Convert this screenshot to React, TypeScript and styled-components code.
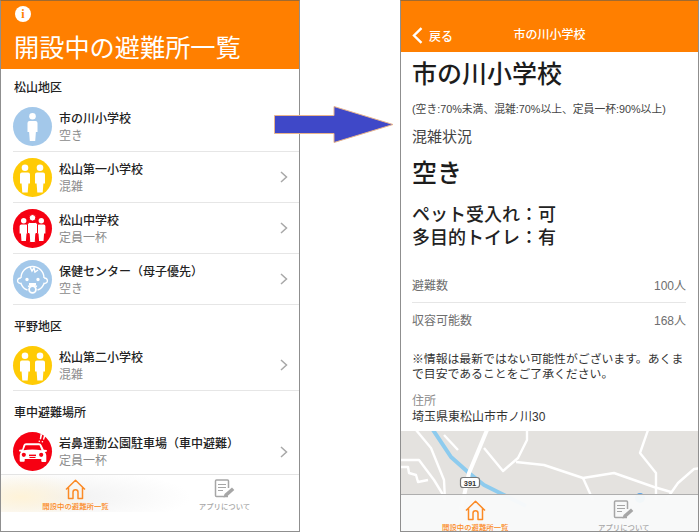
import React from "react";
import styled, { createGlobalStyle } from "styled-components";

const GlobalStyle = createGlobalStyle`
  html, body { margin: 0; padding: 0; background: #fff; }
  body { font-family: "Liberation Sans", "Noto Sans CJK JP", sans-serif; color: #222; }
`;

const ORANGE = "#ff7f00";
const BLUE = "#a3c8ea";
const YELLOW = "#ffcb05";
const RED = "#f60012";

const Page = styled.div`
  position: relative;
  width: 700px;
  height: 532px;
  display: flex;
  gap: 100px;
  overflow: hidden;
`;

const Phone = styled.div<{ $width: number }>`
  position: relative;
  box-sizing: border-box;
  width: ${(p) => p.$width}px;
  height: 532px;
  border: 1px solid #8f8f8f;
  border-top-color: #a06a30;
  display: flex;
  flex-direction: column;
  overflow: hidden;
  background: #fff;
`;

/* ---------- list screen ---------- */

const ListHeader = styled.header`
  height: 68px;
  flex: none;
  background: ${ORANGE};
  padding: 5px 0 0 13px;
  box-sizing: border-box;
  color: #fff;
`;

const InfoBadge = styled.div`
  width: 16px;
  height: 16px;
  margin-left: 1px;
  border-radius: 50%;
  background: #fff;
  color: ${ORANGE};
  display: flex;
  align-items: center;
  justify-content: center;
  font: bold 12px "Liberation Serif", serif;
`;

const BigTitle = styled.h1`
  margin: 10px 0 0;
  font-size: 25.2px;
  line-height: 32px;
  font-weight: 400;
`;

const List = styled.div`
  flex: 1;
  overflow: hidden;
`;

const SectionLabel = styled.div<{ $height: number }>`
  height: ${(p) => p.$height}px;
  box-sizing: border-box;
  display: flex;
  align-items: flex-end;
  padding: 0 0 4px 13px;
  font-size: 12px;
  line-height: 18px;
  font-weight: 500;
  color: #222;
`;

const Row = styled.div<{ $last?: boolean }>`
  height: 51px;
  box-sizing: border-box;
  margin-left: 12px;
  padding-right: 11px;
  display: flex;
  align-items: center;
  border-bottom: ${(p) => (p.$last ? "none" : "1px solid #e6e6e6")};
`;

const Avatar = styled.div<{ $color: string }>`
  width: 39px;
  height: 39px;
  flex: none;
  border-radius: 50%;
  background: ${(p) => p.$color};
  display: flex;
  align-items: center;
  justify-content: center;
`;

const RowText = styled.div`
  flex: 1;
  margin-left: 7px;
  padding-top: 2px;
`;

const RowName = styled.div`
  font-size: 12px;
  line-height: 17px;
  font-weight: 500;
  color: #222;
`;

const RowStatus = styled.div`
  font-size: 12px;
  line-height: 16px;
  color: #8c8c8c;
`;

const Tab = styled.div<{ $active?: boolean }>`
  flex: 1;
  display: flex;
  flex-direction: column;
  align-items: center;
  padding-top: 4px;
  color: ${(p) => (p.$active ? "#fb8a25" : "#a6a6a6")};
`;

const TabLabel = styled.div`
  margin-top: 1px;
  font-size: 7.4px;
  line-height: 12px;
  font-weight: 500;
  white-space: nowrap;
`;

const TabBar = styled.nav`
  height: 57px;
  flex: none;
  box-sizing: border-box;
  display: flex;
  border-top: 1px solid #e4e4e4;
  background:
    radial-gradient(ellipse 70px 24px at 20px 22px, #fff3d8 0%, rgba(255, 243, 216, 0) 100%) no-repeat,
    radial-gradient(ellipse 130px 28px at 60px 22px, #f1f1f1 0%, rgba(241, 241, 241, 0) 100%) no-repeat,
    #fff;
  background-size: 100% 37px, 100% 37px, auto;
`;

const OverlayTabs = styled(TabBar)`
  position: absolute;
  left: 0;
  right: 0;
  top: 493px;
  height: 40px;
  border-top-color: #aeaeae;
  background: rgba(249, 250, 250, 0.96);

  ${Tab} {
    padding-top: 5px;
  }
`;

/* ---------- detail screen ---------- */

const NavBar = styled.header`
  position: relative;
  height: 51px;
  flex: none;
  background: ${ORANGE};
  color: #fff;
  padding: 17px 11px 0;
  box-sizing: border-box;
  display: flex;
  align-items: center;
`;

const BackLabel = styled.span`
  margin-left: 6px;
  font-size: 12px;
  font-weight: 500;
`;

const NavTitle = styled.div`
  position: absolute;
  left: 0;
  right: 0;
  top: 25px;
  height: 18px;
  line-height: 18px;
  text-align: center;
  font-size: 12px;
  font-weight: 500;
`;

const Detail = styled.div`
  padding: 0 12px 0 11px;
  flex: none;
`;

const Heading = styled.h2`
  margin: 4px 0 0;
  font-size: 25px;
  line-height: 36px;
  font-weight: 500;
  color: #1c1c1c;
`;

const Legend = styled.div`
  margin-top: 10px;
  font-size: 10.8px;
  line-height: 14px;
  color: #444;
  white-space: nowrap;
`;

const StatusCaption = styled.div`
  margin-top: 10px;
  font-size: 15px;
  line-height: 22px;
  color: #444;
`;

const StatusValue = styled.div`
  margin-top: 7px;
  font-size: 25px;
  line-height: 36px;
  font-weight: 500;
  color: #1c1c1c;
`;

const Facility = styled.div`
  margin-top: 13px;
  font-size: 18px;
  line-height: 23px;
  font-weight: 500;
  color: #222;
`;

const StatRow = styled.div<{ $divider?: boolean }>`
  height: ${(p) => (p.$divider ? 35 : 33)}px;
  display: flex;
  align-items: center;
  justify-content: space-between;
  font-size: 12px;
  color: #6e6e6e;
  border-bottom: ${(p) => (p.$divider ? "1px solid #e6e6e6" : "none")};
`;

const Stats = styled.div`
  margin-top: 17px;
`;

const Note = styled.p`
  margin: 16px 0 0;
  font-size: 11.85px;
  line-height: 15px;
  color: #333;
  white-space: nowrap;
`;

const AddressLabel = styled.div`
  margin-top: 11px;
  font-size: 12px;
  line-height: 16px;
  color: #8c8c8c;
`;

const Address = styled.div`
  font-size: 12px;
  line-height: 16px;
  color: #333;
`;

const MapArea = styled.div`
  margin-top: 6px;
  flex: 1;
  background: #e4e2df;
  overflow: hidden;
`;

const Arrow = styled.svg`
  position: absolute;
  left: 274px;
  top: 106px;
`;

/* ---------- drawings ---------- */

const Figure = ({ x, top = 3, scale = 1 }: { x: number; top?: number; scale?: number }) => (
  <g transform={`translate(${x} ${top}) scale(${scale})`}>
    <circle cx="0" cy="3.3" r="3.3" />
    <path d="M-3 8h6q2 0 2 2v9H3.400L2.700 28H-2.700L-3.400 19H-5v-9q0-2 2-2z" />
  </g>
);

const People = ({ count }: { count: 1 | 2 | 3 }) => (
  <svg width="39" height="39" viewBox="-19.5 -19.5 39 39" fill="#fff">
    {count === 1 && <Figure x={0} top={-13.500} />}
    {count === 2 && (
      <>
        <Figure x={-7.5} top={-13} />
        <Figure x={7.5} top={-13} />
      </>
    )}
    {count === 3 && (
      <>
        <Figure x={-8.800} top={-10.500} scale={0.82} />
        <Figure x={8.800} top={-10.500} scale={0.82} />
        <g stroke={RED} strokeWidth="1">
          <Figure x={0} top={-14} />
        </g>
      </>
    )}
  </svg>
);

const Baby = () => (
  <svg width="39" height="39" viewBox="0 0 39 39" fill="none" stroke="#fff" strokeWidth="1.400">
    <path d="M8 18a11.5 11.5 0 0 1 23 0" />
    <path d="M8 18c-2-.3-3.400 1-3.400 2.700S6 23.700 8 23.400c1.300 3.800 4.500 6 6.500 6.600M31 18c2-.3 3.400 1 3.400 2.700S33 23.700 31 23.400c-1.300 3.800-4.500 6-6.500 6.600" />
    <path d="M17 7l2 4 2-3 1 4 3-2" />
    <circle cx="14" cy="19.500" r="1" fill="#fff" />
    <circle cx="25" cy="19.500" r="1" fill="#fff" />
    <path d="M16 24h7" strokeWidth="2" />
    <circle cx="19.500" cy="29.500" r="3.400" strokeWidth="1.800" />
    <path d="M15 26.500q4.500-2 9 0" />
  </svg>
);

const Car = () => (
  <svg width="39" height="39" viewBox="0 0 39 39" fill="#fff">
    <path d="M10.500 13q.7-1.800 2.500-1.800h13q1.800 0 2.500 1.800l2.300 4.700 2.800.3q.8.8 0 1.800l-1.700.2q1.400 1.500 1.400 3.500v5.500q0 1-1 1h-3q-1 0-1-1V27H11.700v1.800q0 1-1 1h-3q-1 0-1-1V23.300q0-2 1.400-3.500l-1.700-.2q-.8-1 0-1.800l2.800-.3z" />
    <path d="M12.500 13.200h14l2 5q-9.500-1.600-18 0z" fill={RED} />
    <circle cx="10.800" cy="22.800" r="2.100" fill={RED} />
    <circle cx="28.200" cy="22.800" r="2.100" fill={RED} />
    <rect x="16" y="22.600" width="7" height="1.500" fill={RED} />
    <rect x="16.500" y="25" width="6" height="1" fill={RED} />
    <path d="M27.500 2l1.800.4-1.300 5-1.300-.3zM31 3l1.600.4-1.500 4.300-1.200-.3z" />
    <circle cx="26.300" cy="9.200" r=".8" />
    <circle cx="29.400" cy="9.700" r=".8" />
  </svg>
);

const HomeIcon = () => (
  <svg width="21" height="21" viewBox="0 0 21 21" fill="none" stroke="currentColor" strokeWidth="1.500" strokeLinejoin="round">
    <path d="M1 10.500L10.500 1.200 20 10.500M3.500 8.500v11h4.500v-6.200q0-2.500 2.500-2.500t2.500 2.500v6.200h4.500v-11" />
  </svg>
);

const MemoIcon = () => (
  <svg width="21" height="21" viewBox="0 0 21 21" fill="none" stroke="currentColor">
    <path d="M14 17.500H2.500q-1 0-1-1V2q0-1 1-1h11q1 0 1 1v7" strokeWidth="1.500" />
    <path d="M4 5.500h8M4 8.500h8M4 11.500h5" strokeWidth="1.200" />
    <path d="M9.500 18.500l1-3.500 7.500-6.500 2.300 2.500-7.300 6.500z" fill="currentColor" stroke="none" />
  </svg>
);

const Chevron = () => (
  <svg width="8" height="12" viewBox="0 0 8 12" fill="none" stroke="#a8a8a8" strokeWidth="1.500">
    <path d="M1 1l5.500 5L1 11" />
  </svg>
);

const BackChevron = () => (
  <svg width="11" height="17" viewBox="0 0 11 17" fill="none" stroke="#fff" strokeWidth="2.400">
    <path d="M9.500 1.200L2 8.500l7.500 7.300" />
  </svg>
);

const MapDrawing = () => (
  <svg width="298" height="100" viewBox="0 1 298 100" fill="none" stroke="#fff" strokeWidth="2.400" strokeLinejoin="round">
    <path d="M32 0L50 27 68 43 83 55 107 67 125 76" stroke="#8dcbee" strokeWidth="4" />
    <path d="M86 0L68 43 60 80" strokeWidth="4" />
    <path d="M15 0L30 18 43 50 44 70" />
    <path d="M43 5L57 20" />
    <path d="M0 30L18 30 33 50 44 68" />
    <path d="M0 37L7 37 8 43 15 45 17 52 27 50" />
    <path d="M83 18L102 41 117 28 126 10 126 0" />
    <path d="M115 32L143 35 182 48 213 43 253 57 270 62" />
    <path d="M182 48L192 70" />
    <path d="M247 0L239 23 255 43 255 70" />
    <path d="M265 70L277 53 293 39 300 38" />
    <circle cx="239" cy="68" r="5" fill="#5aa5e8" stroke="none" />
    <rect x="59.500" y="47.500" width="19" height="10" rx="2.500" fill="#fff" stroke="#777" strokeWidth="1.200" />
    <text x="69" y="55.500" textAnchor="middle" fontSize="7.500" fontWeight="700" fill="#333" stroke="none" fontFamily="Liberation Sans, sans-serif">391</text>
  </svg>
);

const Tabs = () => (
  <>
    <Tab $active>
      <HomeIcon />
      <TabLabel>開設中の避難所一覧</TabLabel>
    </Tab>
    <Tab>
      <MemoIcon />
      <TabLabel>アプリについて</TabLabel>
    </Tab>
  </>
);

type Shelter = { name: string; status: string; color: string; icon: React.ReactNode; last?: boolean };

const ShelterRow = ({ name, status, color, icon, last }: Shelter) => (
  <Row $last={last}>
    <Avatar $color={color}>{icon}</Avatar>
    <RowText>
      <RowName>{name}</RowName>
      <RowStatus>{status}</RowStatus>
    </RowText>
    <Chevron />
  </Row>
);

export default function App() {
  return (
    <>
      <GlobalStyle />
      <Page>
        <Phone $width={300}>
          <ListHeader>
            <InfoBadge>i</InfoBadge>
            <BigTitle>開設中の避難所一覧</BigTitle>
          </ListHeader>
          <List>
            <SectionLabel $height={32}>松山地区</SectionLabel>
            <ShelterRow name="市の川小学校" status="空き" color={BLUE} icon={<People count={1} />} />
            <ShelterRow name="松山第一小学校" status="混雑" color={YELLOW} icon={<People count={2} />} />
            <ShelterRow name="松山中学校" status="定員一杯" color={RED} icon={<People count={3} />} />
            <ShelterRow name="保健センター（母子優先）" status="空き" color={BLUE} icon={<Baby />} />
            <SectionLabel $height={35}>平野地区</SectionLabel>
            <ShelterRow name="松山第二小学校" status="混雑" color={YELLOW} icon={<People count={2} />} />
            <SectionLabel $height={35}>車中避難場所</SectionLabel>
            <ShelterRow name="岩鼻運動公園駐車場（車中避難）" status="定員一杯" color={RED} icon={<Car />} last />
          </List>
          <TabBar>
            <Tabs />
          </TabBar>
        </Phone>

        <Phone $width={299}>
          <NavBar>
            <BackChevron />
            <BackLabel>戻る</BackLabel>
            <NavTitle>市の川小学校</NavTitle>
          </NavBar>
          <Detail>
            <Heading>市の川小学校</Heading>
            <Legend>(空き:70%未満、混雑:70%以上、定員一杯:90%以上)</Legend>
            <StatusCaption>混雑状況</StatusCaption>
            <StatusValue>空き</StatusValue>
            <Facility>
              ペット受入れ：可
              <br />
              多目的トイレ：有
            </Facility>
            <Stats>
              <StatRow $divider>
                <span>避難数</span>
                <span>100人</span>
              </StatRow>
              <StatRow>
                <span>収容可能数</span>
                <span>168人</span>
              </StatRow>
            </Stats>
            <Note>
              ※情報は最新ではない可能性がございます。あくま
              <br />
              で目安であることをご了承ください。
            </Note>
            <AddressLabel>住所</AddressLabel>
            <Address>埼玉県東松山市市ノ川30</Address>
          </Detail>
          <MapArea>
            <MapDrawing />
          </MapArea>
          <OverlayTabs>
            <Tabs />
          </OverlayTabs>
        </Phone>

        <Arrow width="120" height="38" viewBox="0 0 120 38">
          <path d="M.5 9.500H60V.500L119 18.500 60 36.500V27.500H.5z" fill="#3f48c8" stroke="#e8b48c" strokeWidth="1" />
        </Arrow>
      </Page>
    </>
  );
}
